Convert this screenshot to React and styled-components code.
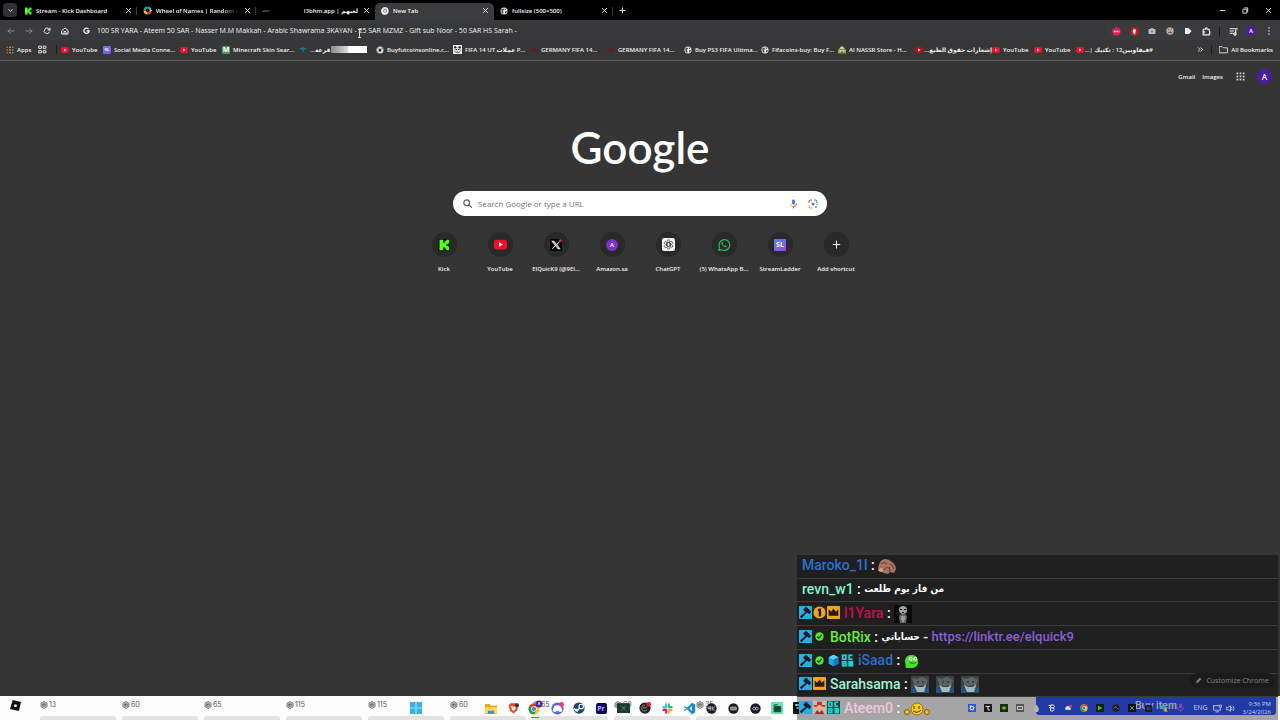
import React from "react";
import styled, { createGlobalStyle, css } from "styled-components";

const GlobalStyle = createGlobalStyle`
  * { box-sizing: border-box; }
  html, body { margin: 0; background: #353535; }
  body { font: 600 6px/10px "Open Sans", "Noto Sans", "DejaVu Sans", sans-serif; color: #f0f0f0; }
  button, input { font: inherit; color: inherit; border: 0; background: none; padding: 0; margin: 0; outline: 0; }
  button { display: inline-flex; align-items: center; justify-content: center; }
  a { color: inherit; text-decoration: none; }
  svg { display: block; flex: none; }
`;

/* ---------- layout ---------- */
const Screen = styled.div`
  position: relative;
  display: flex;
  flex-direction: column;
  min-height: 100vh;
  overflow: hidden;
`;
const TabStrip = styled.header`
  display: flex;
  align-items: flex-end;
  height: 20px;
  padding-left: 3px;
  background: #000;
`;
const TabSearch = styled.button`
  width: 14px;
  height: 14px;
  margin: 0 1px 3px 0;
  border-radius: 4px;
  background: #303132;
`;
const Tab = styled.div`
  display: flex;
  align-items: center;
  gap: 4px;
  width: 119px;
  height: 17px;
  padding: 0 5px 2px 6px;
  border-radius: 5px 5px 0 0;
  background: ${(p) => (p.$active ? "#3b3c3d" : "transparent")};
`;
const TabDivider = styled.span`
  width: 1px;
  height: 8px;
  margin: 0 0 5px -1px;
  background: #3c3c3c;
`;
const TabTitle = styled.span`
  flex: 1;
  overflow: hidden;
  white-space: nowrap;
  color: #f6f6f6;
  ${(p) => p.$fade && css`mask-image: linear-gradient(90deg, #000 80%, transparent);`}
`;
const TabClose = styled.button`
  width: 8px;
  height: 10px;
`;
const NewTabButton = styled.button`
  width: 18px;
  height: 17px;
  padding-bottom: 2px;
`;
const WindowControls = styled.div`
  display: flex;
  margin-left: auto;
`;
const WindowButton = styled.button`
  width: 23px;
  height: 20px;
`;
const Toolbar = styled.div`
  position: relative;
  display: flex;
  align-items: center;
  height: 20px;
  padding-top: 2px;
  background: #3a3b3c;
`;
const NavButton = styled.button`
  width: 18px;
  height: 18px;
  color: ${(p) => (p.$dim ? "#858585" : "#ececec")};
`;
const NavGroup = styled.div`
  display: flex;
  width: 80px;
  padding-left: 2px;
`;
const AddressBar = styled.label`
  display: flex;
  flex: 1;
  align-items: center;
  gap: 7px;
  height: 17px;
  padding-left: 3px;
  border-radius: 9px;
  background: #373839;
`;
const AddressInput = styled.input`
  flex: 1;
  color: #f4f4f4;
  font-size: 7px;
  font-weight: 400;
`;
const TextCursor = styled.svg`
  position: absolute;
  left: 357px;
  top: 9px;
`;
const Extensions = styled.div`
  display: flex;
  align-items: center;
  padding-right: 2px;
`;
const ToolButton = styled.button`
  width: 18px;
  height: 18px;
`;
const Divider = styled.span`
  width: 1px;
  height: 9px;
  margin: 0 4px;
  background: #1c1c1c;
`;
const BookmarksBar = styled.nav`
  display: flex;
  align-items: center;
  height: 21px;
  padding: 0 7px 1px 6px;
  background: #373737;
  border-bottom: 1px solid #5a5a5a;
`;
const Bookmark = styled.a`
  display: flex;
  align-items: center;
  gap: 3px;
  width: ${(p) => (p.$short ? "42px" : "77px")};
  white-space: nowrap;
`;
const BookmarkText = styled.span`
  min-width: ${(p) => (p.$short ? "0" : "57px")};
`;
const BlankedText = styled.span`
  display: inline-block;
  width: 36px;
  height: 7px;
  margin: 0 4px 0 1px;
  vertical-align: middle;
  background: linear-gradient(90deg, #8b8b8b, #d6d6d6 45%, #fff 50%);
`;
const AppsLink = styled.a`
  display: flex;
  align-items: center;
  gap: 3px;
  width: 32px;
`;
const GroupsLink = styled.a`
  padding-right: 5px;
`;
const BookmarkEnd = styled.div`
  display: flex;
  align-items: center;
  gap: 3px;
  margin-left: auto;
  white-space: nowrap;
`;

/* ---------- new tab page ---------- */
const NewTabPage = styled.main`
  display: flex;
  flex: 1;
  flex-direction: column;
  align-items: center;
  background: #353535;
`;
const AccountNav = styled.nav`
  display: flex;
  align-self: flex-end;
  align-items: center;
  gap: 7px;
  height: 31px;
  padding-right: 8px;
`;
const AppsButton = styled.button`
  margin: 0 5px 0 6px;
`;
const Avatar = styled.span`
  display: flex;
  align-items: center;
  justify-content: center;
  width: ${(p) => p.$size}px;
  height: ${(p) => p.$size}px;
  border-radius: 50%;
  background: ${(p) => p.$color || "#4a1d9e"};
  color: #fff;
  font-size: ${(p) => (p.$size > 12 ? 8 : 6)}px;
  font-weight: 600;
`;
const Wordmark = styled.h1`
  margin: 26px 0 0;
  height: 73px;
  color: #fff;
  font: 600 44px/58px Lato, sans-serif;
`;
const SearchBox = styled.label`
  display: flex;
  align-items: center;
  width: 374px;
  height: 25px;
  padding: 0 4px 0 10px;
  border-radius: 13px;
  background: #fff;
`;
const SearchInput = styled.input`
  flex: 1;
  padding-left: 6px;
  color: #444;
  font-size: 8px;
  font-weight: 400;
  &::placeholder { color: #757575; opacity: 1; }
`;
const SearchAction = styled.button`
  width: 20px;
  height: 12px;
`;
const Shortcuts = styled.div`
  display: flex;
  padding-top: 16px;
`;
const Shortcut = styled.a`
  display: flex;
  flex-direction: column;
  align-items: center;
  gap: 7px;
  width: 56px;
  white-space: nowrap;
`;
const ShortcutIcon = styled.span`
  display: flex;
  align-items: center;
  justify-content: center;
  width: 25px;
  height: 25px;
  border-radius: 50%;
  background: #292929;
`;
const LetterTile = styled.span`
  display: flex;
  flex: none;
  align-items: center;
  justify-content: center;
  width: ${(p) => p.$size}px;
  height: ${(p) => p.$size}px;
  border-radius: ${(p) => p.$radius || 1}px;
  background: ${(p) => p.$color};
  color: ${(p) => p.$ink || "#fff"};
  font-size: ${(p) => p.$font || 5}px;
  font-weight: 700;
  line-height: 1;
`;
const CustomizeButton = styled.button`
  position: absolute;
  right: 6px;
  bottom: 32px;
  z-index: 3;
  gap: 4px;
  width: 84px;
  height: 15px;
  border-radius: 8px;
  background: #1b1b1b;
  color: #858585;
  font-size: 7px;
  font-weight: 400;
`;

/* ---------- bottom strip ---------- */
const BottomStrip = styled.footer`
  position: relative;
  height: 24px;
  overflow: hidden;
  background: #fdfdfd;
  color: #555;
`;
const StoreRow = styled.div`
  display: flex;
  gap: 6px;
  padding-left: 10px;
`;
const StoreLogo = styled.a`
  width: 24px;
  padding-top: 4px;
`;
const StoreItem = styled.div`
  display: flex;
  flex-direction: column;
  gap: 6px;
  width: 76px;
`;
const Price = styled.span`
  display: flex;
  align-items: center;
  gap: 1px;
  height: 14px;
  padding-top: 3px;
  font: 7px/10px Inter, sans-serif;
`;
const ItemCard = styled.span`
  height: 10px;
  border-radius: 3px 3px 0 0;
  background: #e2e2e2;
`;
const BuyButton = styled.button`
  position: absolute;
  right: 4px;
  top: 0;
  width: 240px;
  height: 19px;
  border-radius: 0 0 3px 3px;
  background: #335aff;
  color: #fff;
  font: 600 10px/19px Inter, sans-serif;
`;
const TaskIcons = styled.div`
  position: absolute;
  inset: 0 auto 0 405px;
  display: flex;
  align-items: center;
`;
const TaskButton = styled.button`
  width: 22px;
  height: 24px;
  margin-right: ${(p) => (p.$start ? "53px" : 0)};
  ${(p) => p.$open && css`background: linear-gradient(#d8584c, #d8584c) center bottom 2px / 8px 1px no-repeat;`}
`;
const Tray = styled.div`
  position: absolute;
  right: 9px;
  bottom: 0;
  z-index: 4;
  display: flex;
  align-items: center;
  height: 24px;
  color: #cbd0e8;
  font-weight: 400;
`;
const TrayButton = styled.button`
  width: 16px;
  height: 20px;
`;
const Language = styled.span`
  width: 25px;
  font-size: 7px;
  text-align: center;
`;
const Clock = styled.time`
  width: 33px;
  line-height: 8px;
  text-align: right;
`;

/* ---------- chat overlay ---------- */
const Chat = styled.section`
  position: absolute;
  right: 2px;
  bottom: 0;
  z-index: 2;
  display: flex;
  flex-direction: column;
  width: 481px;
  height: 165px;
  font: 500 14px/20px Roboto, "DejaVu Sans", sans-serif;
`;
const Message = styled.div`
  display: flex;
  flex: 1;
  align-items: center;
  padding: 0 0 2px 1px;
  white-space: pre;
  color: #fff;
  background: ${(p) => (p.$faded ? "rgba(0,0,0,.35)" : "#1f1f1f")};
  border-bottom: ${(p) => (p.$faded ? 0 : "1px solid #3b3b3b")};
`;
const Badge = styled.span`
  display: flex;
  justify-content: center;
  width: 14px;
`;
const Author = styled.span`
  margin-left: 4px;
  color: ${(p) => p.$color};
`;
const ArabicText = styled.span`
  font: 700 10px/20px "DejaVu Sans Condensed", "DejaVu Sans", sans-serif;
`;
const ChatLink = styled.a`
  color: #8b5ddb;
  font-size: 13px;
`;
const Emote = styled.span`
  margin: 2px 7px 0 0;
`;

/* ---------- drawings ---------- */
const Line = ({ d, size = 8, width = 2, color = "currentColor", fill = "none" }) => (
  <svg width={size} height={size} viewBox="0 0 16 16" fill={fill} stroke={color} strokeWidth={width} strokeLinecap="round" strokeLinejoin="round"><path d={d} /></svg>
);
const Cross = ({ size = 7 }) => <Line size={size} d="M3 3l10 10M13 3L3 13" color="#f0f0f0" />;
const Kick = ({ size = 8, tile }) => (
  <svg width={size} height={size} viewBox="0 0 16 16">
    {tile && <rect width="16" height="16" fill="#071006" />}
    <path fill="#53fc18" d="M2 1h5v4h2V3h2V1h4v5h-2v1h-2v2h2v1h2v5h-4v-2H9v-2H7v4H2z" />
  </svg>
);
const YouTube = ({ size = 8, color = "#f20d2f" }) => (
  <svg width={size} height={size} viewBox="0 0 16 16"><rect y="2" width="16" height="12" rx="3.5" fill={color} /><path d="M6.2 5.2v5.6L11 8z" fill="#fff" /></svg>
);
const Globe = ({ size = 8 }) => (
  <svg width={size} height={size} viewBox="0 0 16 16"><circle cx="8" cy="8" r="7" fill="#e9e9e9" /><path d="M3 4l4-1 1 3-3 2 2 2-1 4-3-3zM9 2l4 3-3 1zM10 9l4-1-2 5-2-1z" fill="#444" /></svg>
);
const Chrome = ({ size = 8, mono }) => (
  <svg width={size} height={size} viewBox="0 0 24 24">
    <circle cx="12" cy="12" r="11" fill={mono ? "#eee" : "#fbc116"} />
    <path d="M12 12L2.5 6.5A11 11 0 0121.5 6.5H12z" fill={mono ? "#ddd" : "#e33b2e"} />
    <path d="M12 12L2.5 6.5A11 11 0 0012 23l4.8-8.3z" fill={mono ? "#fff" : "#229c48"} />
    <circle cx="12" cy="12" r="5.4" fill={mono ? "#444" : "#fff"} /><circle cx="12" cy="12" r="4" fill={mono ? "#ddd" : "#347be5"} />
  </svg>
);
const Wheel = () => (
  <svg width="9" height="9" viewBox="0 0 16 16" fill="none" strokeWidth="4">
    <path d="M8 3a5 5 0 015 5" stroke="#369be8" /><path d="M13 8a5 5 0 01-5 5" stroke="#e94335" /><path d="M8 13a5 5 0 01-5-5" stroke="#f5bd18" /><path d="M3 8a5 5 0 015-5" stroke="#28a55b" />
    <path d="M13 6l3 2-3 2z" fill="#fff" />
  </svg>
);
const GoogleG = () => <svg width="7" height="8" viewBox="0 0 16 16" fill="none" stroke="#f1f1f1" strokeWidth="3"><path d="M13 4A6 6 0 1014 8H8" /></svg>;
const Dots = ({ size = 9, colors = ["#dcdcdc"] }) => (
  <svg width={size} height={size} viewBox="0 0 16 16">{[0, 1, 2].map((r) => [0, 1, 2].map((c) => <rect key={r + "-" + c} x={1 + c * 5.5} y={1 + r * 5.5} width="3" height="3" fill={colors[(colors.length > 1 ? c : 0) % colors.length]} />))}</svg>
);
const Squares = () => <Line size={9} width={1.6} d="M2 2h4v4H2zM10 2h4v4h-4zM2 10h4v4H2zM10 10h4v4h-4z" />;
const Cup = () => <svg width="8" height="8" viewBox="0 0 16 16" fill="none" stroke="#237da5" strokeWidth="2"><path d="M1 6q7-5 14 0M8 5v8M5 7q3-2 6 0" /></svg>;
const Ball = () => <svg width="8" height="8" viewBox="0 0 16 16"><circle cx="8" cy="8" r="7" fill="#ddd" /><path d="M8 5l3 2-1 4H6L5 7zM2 4l3-1v2zM11 3l3 2-2 1zM2 11l2 0 1 3z" fill="#222" /></svg>;
const Panda = () => <svg width="9" height="9" viewBox="0 0 16 16"><rect width="16" height="16" fill="#f1f1f1" /><circle cx="4" cy="4" r="2" /><circle cx="12" cy="4" r="2" /><circle cx="8" cy="9" r="5" fill="#fff" stroke="#222" /><circle cx="6" cy="8" r="1.2" /><circle cx="10" cy="8" r="1.2" /><path d="M6 12h4" stroke="#111" /></svg>;
const RedDash = () => <svg width="8" height="8" viewBox="0 0 16 16"><path d="M0 8l6-3 9 2-2 4H3z" fill="#701426" /></svg>;
const Castle = () => <svg width="8" height="9" viewBox="0 0 16 16"><rect y="8" width="16" height="8" fill="#78b04d" /><path d="M3 13V5l5-4 5 4v8z" fill="#d7d08b" /><path d="M5 7h2v2H5zM9 7h2v2H9zM7 11h2v4H7z" fill="#263f20" /></svg>;
const XLogo = () => <svg width="12" height="12" viewBox="0 0 16 16"><rect width="16" height="16" fill="#050505" /><path d="M3 3h2l8 10h-2zM13 3L9 7M7 9l-4 4" fill="none" stroke="#e8e8e8" strokeWidth="1.4" /><circle cx="14" cy="2" r="2" fill="#e71645" /></svg>;
const Knot = () => (
  <svg width="13" height="13" viewBox="0 0 24 24"><rect width="24" height="24" rx="4" fill="#f4f4f4" />
    <g fill="none" stroke="#333" strokeWidth="1.3">{[0, 60, 120, 180, 240, 300].map((a) => <path key={a} transform={`rotate(${a} 12 12)`} d="M9 10V6.6a3.2 3.2 0 015.6-2.1M9 10l3-1.8 4.8 2.8" />)}</g>
  </svg>
);
const WhatsApp = () => <svg width="14" height="14" viewBox="0 0 24 24"><path d="M3 21l1.3-5A9.2 9.2 0 1112 21.2a9.2 9.2 0 01-4.3-1.1z" fill="none" stroke="#27b45c" strokeWidth="2.2" /><path d="M8.2 6.8c-1.5 1.2-1.2 3.5 1.4 6.2s5.4 3.9 7 2.3l.3-1.5-2.6-1.4-1.3 1.2c-1.7-.7-2.7-1.7-3.3-3.2l1-1.2-1.1-2.5z" fill="#27b45c" /></svg>;
const Mic = ({ color }) => (
  <svg width="9" height="10" viewBox="0 0 16 18"><rect x="5.5" y="1" width="5" height="9" rx="2.5" fill={color || "#347be8"} /><path d="M2.5 8a5.5 5.5 0 005.5 5.5" fill="none" stroke={color || "#f0a929"} strokeWidth="1.8" /><path d="M13.5 8A5.5 5.5 0 018 13.5V17" fill="none" stroke={color || "#e64637"} strokeWidth="1.8" /></svg>
);
const Lens = () => (
  <svg width="10" height="10" viewBox="0 0 20 20" fill="none" strokeWidth="2.2"><path d="M2 8V6a4 4 0 014-4h2" stroke="#e84a3c" /><path d="M12 2h2a4 4 0 014 4v2" stroke="#3d7fea" /><path d="M2 12v2a4 4 0 004 4h3" stroke="#efb42c" /><circle cx="10" cy="10" r="3" fill="#3d7fea" /><circle cx="16" cy="16" r="1.8" fill="#35a852" /><path d="M18 10v2" stroke="#35a852" /></svg>
);
const Robux = () => <svg width="8" height="8" viewBox="0 0 16 16" fill="none" stroke="#444"><path d="M8 1l6 3.5v7L8 15l-6-3.5v-7z" strokeWidth="1.5" /><path d="M8 4l3.5 2v4L8 12l-3.5-2V6z" strokeWidth="1.5" /><rect x="7" y="7" width="2" height="2" fill="#444" /></svg>;
const Disc = ({ color, children, size = 12 }) => <svg width={size} height={size} viewBox="0 0 16 16"><circle cx="8" cy="8" r="7.5" fill={color} />{children}</svg>;
const Box = ({ color, children, size = 9 }) => <svg width={size} height={size} viewBox="0 0 16 16"><rect width="16" height="16" rx="1" fill={color} />{children}</svg>;
const DiscordFace = ({ color = "#fff" }) => <path d="M4 5q4-2 8 0l2 6-3 1.5-1-1H6l-1 1L2 11z" fill={color} />;

const Hammer = () => <Box size={13} color="#26aee8"><path d="M7 2l2-1 6 6-2 3-3-2-7 7-2-2 7-6-3-2z" fill="#101b24" /></Box>;
const Crown = () => <Box size={13} color="#f0a51c"><path d="M2 4l3 3 3-4 3 4 3-3v8H2z" fill="#2a1b05" /></Box>;
const Coin = () => <Disc size={13} color="#f0a51c"><path d="M6 4l2-1h2v10H7V6H6z" fill="#251706" /></Disc>;
const Check = () => <Disc size={9} color="#57e326"><path d="M4 8l3 3 5-6" fill="none" stroke="#123f0b" strokeWidth="2" /></Disc>;
const Cube = () => <svg width="13" height="13" viewBox="0 0 16 16"><path d="M8 1l6 3v8l-6 3-6-3V4z" fill="#1ba8e8" /><path d="M8 1l6 3-6 3-6-3z" fill="#5ed1fa" /><path d="M8 7v8l6-3V4z" fill="#1379bd" /></svg>;
const Sub = () => (
  <svg width="13" height="13" viewBox="0 0 16 16" fill="none" stroke="#17d5d0" strokeWidth="2">
    <rect width="16" height="16" fill="#163a41" stroke="none" />
    <path d="M2 1.5h4v5H2zM14 1.5h-4v5h4M2 9.5h4v5H2zM2 12h4M10 9.5h4v5h-4zM12 9v6" />
  </svg>
);
const Spy = () => <svg width="13" height="13" viewBox="0 0 16 16"><rect width="16" height="16" fill="#c8bba9" /><path d="M1 5h14v2H1zM5 1h6v4H5z" fill="#c62f27" /><circle cx="8" cy="8" r="3" fill="#e9b890" /><path d="M2 16l3-5 3 3 3-3 3 5z" fill="#a33127" /></svg>;

const Muscle = () => <svg width="18" height="16" viewBox="0 0 18 16"><path d="M0 13Q0 5 4 2q5-3 10 2 4 3 4 7l-2 4-4-1-2 2-4-1-2-1z" fill="#a67460" /><path d="M3 6q3-3 6 0M6 12q2-4 5-2M12 6q3 1 4 5M11 9l1 5" fill="none" stroke="#5b3c35" /><circle cx="3" cy="12" r="2" fill="#d5a088" /></svg>;
const Skull = () => <svg width="18" height="18" viewBox="0 0 18 18"><rect width="18" height="18" fill="#080808" /><ellipse cx="9" cy="5" rx="4" ry="4" fill="#a2a2a2" /><path d="M6 4h2v1H6zM10 4h2v1h-2zM8 7h2v1H8z" fill="#111" /><path d="M5 12q0-3 4-3t4 3l-1 6H6z" fill="#666" /><path d="M7 12h4M7 14h4M8 16h2" stroke="#ccc" /></svg>;
const Blob = () => <svg width="15" height="15" viewBox="0 0 16 16"><path d="M2 15L1 7Q2 1 8 1t7 6-5 8z" fill="#49df2d" /><circle cx="7" cy="5" r="2" fill="#fff" /><circle cx="12" cy="5" r="2" fill="#fff" /><path d="M7 5h1M12 5h1" stroke="#111" /><path d="M6 9q4 2 7 0" fill="none" stroke="#176511" /></svg>;
const CatEmote = () => <svg width="18" height="17" viewBox="0 0 18 17"><rect width="18" height="17" fill="#39444a" /><path d="M1 2l5 1 5-2 6 3-2 5-11 1z" fill="#5f6361" /><path d="M3 9l4 2 5 0 3-3-1 8H6z" fill="#a5b6be" /><path d="M0 9l3 1 3 7H0zM14 12h4v5h-5z" fill="#24527f" /><path d="M6 6h2M11 6h2" stroke="#1b1b1b" strokeWidth="1" /></svg>;
const Smile = () => <svg width="26" height="14" viewBox="0 0 26 14"><circle cx="13" cy="7" r="6" fill="#f8cf1c" stroke="#a36c04" /><circle cx="3" cy="10" r="2.5" fill="#efc11a" stroke="#805b0b" /><circle cx="23" cy="10" r="2.5" fill="#efc11a" stroke="#805b0b" /><path d="M10 4v3M15 4v3M9 9q4 3 8-1" fill="none" stroke="#4c2c00" /></svg>;

/* ---------- data ---------- */
const sl = (size, font) => <LetterTile $size={size} $font={font} $color="linear-gradient(135deg,#4d8be8,#9545eb)">SL</LetterTile>;
const tabs = [
  { icon: <Kick />, title: "Stream - Kick Dashboard", divider: true },
  { icon: <Wheel />, title: "Wheel of Names | Random nam", fade: true, divider: true },
  { icon: <Line d="M2 9l6-1 6 0" color="#777" />, title: "لعبهم | l3bhm.app", rtl: true },
  { icon: <Chrome mono />, title: "New Tab", active: true },
  { icon: <Globe />, title: "fullsize (500×500)", divider: true },
];
const bookmarks = [
  { icon: <YouTube />, text: "YouTube", short: true },
  { icon: sl(8, 4), text: "Social Media Conne..." },
  { icon: <YouTube />, text: "YouTube", short: true },
  { icon: <LetterTile $size={8} $font={7} $color="#4c9a52">M</LetterTile>, text: "Minecraft Skin Sear..." },
  { icon: <Cup />, text: "قرعة...", rtl: true, blanked: true },
  { icon: <Ball />, text: "Buyfutcoinsonline.c..." },
  { icon: <Panda />, text: "FIFA 14 UT عملات P..." },
  { icon: <RedDash />, text: "GERMANY FIFA 14..." },
  { icon: <RedDash />, text: "GERMANY FIFA 14..." },
  { icon: <Globe />, text: "Buy PS3 FIFA Ultima..." },
  { icon: <Globe />, text: "Fifacoins-buy: Buy F..." },
  { icon: <Castle />, text: "Al NASSR Store - H..." },
  { icon: <YouTube color="#b50d18" />, text: "إشعارات حقوق الطبع...", rtl: true },
  { icon: <YouTube />, text: "YouTube", short: true },
  { icon: <YouTube />, text: "YouTube", short: true },
  { icon: <YouTube />, text: "#فيفاوبين12 : تكتيك |...", rtl: true },
];
const shortcuts = [
  [<Kick size={12} tile />, "Kick"],
  [<YouTube size={13} />, "YouTube"],
  [<XLogo />, "ElQuicK9 (@9El..."],
  [<Avatar $size={12} $color="#7834c8">A</Avatar>, "Amazon.sa"],
  [<Knot />, "ChatGPT"],
  [<WhatsApp />, "(5) WhatsApp B..."],
  [sl(12, 7), "StreamLadder"],
  [<Line d="M8 2v12M2 8h12" size={9} />, "Add shortcut"],
];
const extensions = [
  ["Ad blocker", <Disc size={9} color="#e41f50"><path d="M3 8h10" stroke="#fff" strokeWidth="3" strokeDasharray="2 1" /></Disc>],
  ["Content blocker", <Disc size={9} color="#cf1520"><path d="M6 4h4v5l-1 4H7L5 8z" fill="#fff" /></Disc>],
  ["Camera", <svg width="8" height="8" viewBox="0 0 16 16"><path d="M1 4h4l1-2h4l1 2h4v10H1z" fill="#bdbdbd" /><circle cx="8" cy="9" r="3" fill="#777" stroke="#eee" /></svg>],
  ["Cookies", <Disc size={8} color="#bba99e"><path d="M4 5h2M10 4h2M4 11h8M7 8h2" stroke="#735c50" strokeWidth="2" /></Disc>],
  ["Player", <svg width="8" height="8" viewBox="0 0 16 16"><path d="M2 2h7l6 6-5 6H2z" fill="#eee" /></svg>],
  ["Extensions", <Line size={9} d="M2 4h4V2h3v2h4v4h1v3h-1v3H2v-4h2V8H2z" />],
];
const taskbar = [
  ["Files", <svg width="12" height="11" viewBox="0 0 16 14"><path d="M0 1h6l2 2h8v11H0z" fill="#e9a91d" /><path d="M0 5h16v8H0z" fill="#ffd45b" /><path d="M4 10h8v4H4z" fill="#2d91da" /></svg>],
  ["Brave", <svg width="11" height="12" viewBox="0 0 16 16"><path d="M3 1h10l2 4-2 7-5 4-5-4-2-7z" fill="#ee492c" /><path d="M4 5l4 1 4-1-2 6-2 1-2-1z" fill="#fff" /><circle cx="13" cy="4" r="3" fill="#333" /></svg>],
  ["Chrome", <svg width="16" height="16" viewBox="0 0 16 16"><g transform="translate(1 3)"><Chrome size={12} /></g><circle cx="12" cy="4" r="3.5" fill="#4f249f" /><path d="M11 5l1-3 1 3" stroke="#fff" strokeWidth=".7" fill="none" /></svg>, true],
  ["Discord", <Disc size={13} color="#5865e9"><DiscordFace /><circle cx="13" cy="3" r="3" fill="#ea3f66" /></Disc>],
  ["Steam", <Disc color="#174572"><circle cx="11" cy="6" r="3" fill="none" stroke="#fff" strokeWidth="1.5" /><path d="M1 9l5 2 3-3" stroke="#fff" strokeWidth="2" fill="none" /><circle cx="5" cy="11" r="2" fill="#fff" /></Disc>],
  ["Premiere", <LetterTile $size={11} $font={7} $radius={2} $color="#09075d" $ink="#c5a5ff">Pr</LetterTile>],
  ["Capture", <svg width="13" height="11" viewBox="0 0 16 13"><rect width="16" height="12" fill="#173a30" /><path d="M5 3l6 6M11 3l-6 6" stroke="#619d76" /></svg>],
  ["OBS", <Disc color="#222"><path d="M8 4a4 4 0 103 6M5 7q3 3 6-1" fill="none" stroke="#aaa" /><circle cx="13" cy="3" r="3" fill="#ed1b26" /></Disc>],
  ["Slack", <svg width="11" height="11" viewBox="0 0 16 16" strokeWidth="3" strokeLinecap="round"><path d="M6 2v4M2 6h3" stroke="#36c5f0" /><path d="M10 6h4M10 2v4" stroke="#2eb67d" /><path d="M10 10v4M10 10h4" stroke="#ecb22e" /><path d="M2 10h4M6 10v4" stroke="#e01e5a" /></svg>],
  ["Code", <svg width="13" height="13" viewBox="0 0 16 16"><path d="M11 1l4 2v10l-4 2-6-6-3 2-1-1 3-2-3-2 1-1 3 2zM11 5L8 8l3 3z" fill="#168bd2" fillRule="evenodd" /></svg>],
  ["4K Capture", <Disc size={11} color="#181a28"><path d="M3 5v3h3V5v6M9 5v6M13 5l-3 3 3 3" fill="none" stroke="#fff" /></Disc>],
  ["Stream Deck", <Disc size={11} color="#181a28"><path d="M4 6h8v4H4z" fill="#777" stroke="#ddd" /></Disc>],
  ["Wave Link", <Disc size={11} color="#181a28"><circle cx="6" cy="8" r="2" fill="none" stroke="#ddd" /><circle cx="10" cy="8" r="2" fill="none" stroke="#ddd" /></Disc>],
  ["Camera Hub", <Box size={12} color="#67e4ad"><path d="M4 6h9v7H4zM3 5q3-3 6-1" fill="#164737" stroke="#164737" /></Box>],
  ["Cap", <Box size={12} color="#111"><path d="M3 4h7M5 8h7" stroke="#fff" strokeWidth="2" /></Box>],
];
const trayIcons = [
  <Box color="#3156d4" size={8}><path d="M5 4l7 2-2 6-6-2z" fill="none" stroke="#fff" strokeWidth="2" /></Box>,
  <Box color="#171717" size={8}><path d="M3 5h9M8 5v7h4" stroke="#ddd" strokeWidth="2" fill="none" /></Box>,
  <Box color="#142b10" size={8}><path d="M3 8q5-7 10 0-5 7-10 0z" fill="#6eac1d" /></Box>,
  <Box color="#555" size={8}><path d="M3 5h10v6H3z" fill="none" stroke="#ccc" strokeWidth="2" /></Box>,
  <svg width="7" height="9" viewBox="0 0 14 16"><path d="M7 0l5 8-2 7H3l-2-6z" fill="#b9b0a6" /></svg>,
  <Line size={8} color="#d9def7" d="M2 3h4M3 7h3M6 2h5q3 3 0 6 3 3-1 6H6zM7 8h4" />,
  <svg width="8" height="8" viewBox="0 0 16 16"><DiscordFace color="#d9dcf5" /><circle cx="13" cy="4" r="3" fill="#df3b4d" /></svg>,
  <Chrome size={8} />,
  <Box color="#0b210d" size={8}><path d="M4 3l9 5-9 5z" fill="#49b52e" /></Box>,
  <Disc color="#202027" size={8}><path d="M4 9q2-6 5-2t4 2" fill="none" stroke="#d34d4d" strokeWidth="2" /></Disc>,
  <Box color="#111" size={8}><path d="M4 4l8 8M12 4l-8 8" stroke="#6a9f78" strokeWidth="2" /></Box>,
  <Box color="#161e32" size={7}><path d="M4 5h8v6H4z" fill="#33456d" /></Box>,
  <svg width="8" height="8" viewBox="0 0 16 16"><path d="M1 2h9l2 6-5 4-6-4z" fill="#29a9c0" /><path d="M11 7l4 8H7z" fill="#edb233" /></svg>,
  <Mic color="#8051b1" />,
];
const messages = [
  { name: "Maroko_1l", color: "#2b70cc", body: <Emote><Muscle /></Emote> },
  { name: "revn_w1", color: "#84f1cf", body: <ArabicText dir="rtl">من فاز يوم طلعت</ArabicText> },
  { badges: [Hammer, Coin, Crown], name: "l1Yara", color: "#c50f48", body: <Emote><Skull /></Emote> },
  { badges: [Hammer, Check], name: "BotRix", color: "#66f036", body: <><ArabicText>حساباتي</ArabicText><span> - </span><ChatLink href="https://linktr.ee/elquick9">https://linktr.ee/elquick9</ChatLink></> },
  { badges: [Hammer, Check, Cube, Sub], name: "iSaad", color: "#2b70cc", body: <Emote><Blob /></Emote> },
  { badges: [Hammer, Crown], name: "Sarahsama", color: "#a0f5d5", body: <><Emote><CatEmote /></Emote><Emote><CatEmote /></Emote><Emote><CatEmote /></Emote></> },
  { badges: [Hammer, Spy, Sub], name: "Ateem0", color: "#f4c3df", body: <Emote><Smile /></Emote>, faded: true },
];
const prices = [13, 60, 65, 115, 115, 60, 65, 60, 35];

export default function App() {
  return (
    <Screen>
      <GlobalStyle />
      <TabStrip>
        <TabSearch aria-label="Search tabs"><Line size={7} d="M4 6l4 4 4-4" /></TabSearch>
        {tabs.map((t) => (
          <React.Fragment key={t.title}>
            <Tab $active={t.active}>
              {t.icon}
              <TabTitle $fade={t.fade} dir={t.rtl ? "rtl" : "ltr"}>{t.title}</TabTitle>
              <TabClose aria-label="Close tab"><Cross /></TabClose>
            </Tab>
            {t.divider && <TabDivider />}
          </React.Fragment>
        ))}
        <NewTabButton aria-label="New tab"><Line size={7} d="M8 2v12M2 8h12" /></NewTabButton>
        <WindowControls>
          <WindowButton aria-label="Minimize"><Line size={7} d="M3 8h10" /></WindowButton>
          <WindowButton aria-label="Restore"><Line size={7} d="M3 5h8v9H3zM6 2h7v9" /></WindowButton>
          <WindowButton aria-label="Close"><Cross /></WindowButton>
        </WindowControls>
      </TabStrip>

      <Toolbar>
        <NavGroup>
          <NavButton $dim aria-label="Back"><Line d="M14 8H2M7 3L2 8l5 5" /></NavButton>
          <NavButton $dim aria-label="Forward"><Line d="M2 8h12M9 3l5 5-5 5" /></NavButton>
          <NavButton aria-label="Reload"><Line d="M13 10a5.5 5.5 0 11-1-6l2 2M14 2v4h-4" /></NavButton>
          <NavButton aria-label="Home"><Line d="M2 7l6-5 6 5v7H2zM6 14V9h4v5" /></NavButton>
        </NavGroup>
        <AddressBar>
          <GoogleG />
          <AddressInput aria-label="Address" defaultValue="100 SR YARA - Ateem 50 SAR - Nasser M.M Makkah - Arabic Shawrama 3KAYAN - 25 SAR MZMZ - Gift sub Noor - 50 SAR HS Sarah -" />
        </AddressBar>
        <Extensions>
          {extensions.map(([label, icon]) => <ToolButton key={label} aria-label={label}>{icon}</ToolButton>)}
          <Divider />
          <ToolButton aria-label="Media"><Line size={9} d="M2 3h8M2 7h6M2 11h4M12 3h3M12 3v8M12 11a2 2 0 11-3 0 2 2 0 013 0" /></ToolButton>
          <ToolButton aria-label="Profile"><Avatar $size={10}>A</Avatar></ToolButton>
          <ToolButton aria-label="Menu"><Line d="M8 2v.2M8 8v.2M8 14v.2" width={3} /></ToolButton>
        </Extensions>
        <TextCursor width="5" height="9" viewBox="0 0 5 9" fill="none" stroke="#ddd"><path d="M1 .5h3M2.5 1v7M1 8.5h3" /></TextCursor>
      </Toolbar>

      <BookmarksBar>
        <AppsLink href="#apps"><Dots size={8} colors={["#d95045", "#deb13b", "#51a566"]} />Apps</AppsLink>
        <GroupsLink href="#groups" aria-label="Tab groups"><Squares /></GroupsLink>
        <Divider />
        {bookmarks.map((b, i) => (
          <Bookmark key={i} href="#bookmark" $short={b.short}>
            {b.icon}
            <BookmarkText $short={b.short} dir={b.rtl ? "rtl" : "ltr"}>{b.blanked && <BlankedText />}{b.text}</BookmarkText>
          </Bookmark>
        ))}
        <BookmarkEnd>
          <Line size={7} d="M3 4l4 4-4 4M9 4l4 4-4 4" />
          <Divider />
          <Line size={9} width={1.5} d="M1 3h5l2 2h7v9H1z" />
          <span>All Bookmarks</span>
        </BookmarkEnd>
      </BookmarksBar>

      <NewTabPage>
        <AccountNav>
          <a href="#gmail">Gmail</a>
          <a href="#images">Images</a>
          <AppsButton aria-label="Google apps"><Dots /></AppsButton>
          <Avatar $size={15}>A</Avatar>
        </AccountNav>
        <Wordmark>Google</Wordmark>
        <SearchBox>
          <Line size={9} color="#555" d="M10.5 10.5L15 15M11.5 6.5a5 5 0 11-10 0 5 5 0 0110 0" />
          <SearchInput aria-label="Search" placeholder="Search Google or type a URL" />
          <SearchAction aria-label="Voice search"><Mic /></SearchAction>
          <SearchAction aria-label="Image search"><Lens /></SearchAction>
        </SearchBox>
        <Shortcuts>
          {shortcuts.map(([icon, label]) => <Shortcut key={label} href="#shortcut"><ShortcutIcon>{icon}</ShortcutIcon>{label}</Shortcut>)}
        </Shortcuts>
      </NewTabPage>

      <BottomStrip>
        <StoreRow>
          <StoreLogo href="#store" aria-label="Store"><svg width="11" height="11" viewBox="0 0 16 16"><path d="M4 0l12 3-3 13-13-3zM6.5 6l-.8 3.5 3.6.9.8-3.5z" fill="#111" fillRule="evenodd" /></svg></StoreLogo>
          {prices.map((p, i) => <StoreItem key={i}><Price><Robux />{p}</Price><ItemCard /></StoreItem>)}
        </StoreRow>
        <BuyButton>Buy item</BuyButton>
        <TaskIcons>
          <TaskButton $start aria-label="Start"><svg width="12" height="12" viewBox="0 0 12 12" fill="#36b4e9"><path d="M0 0h5.7v5.7H0zM6.3 0H12v5.7H6.3zM0 6.3h5.7V12H0zM6.3 6.3H12V12H6.3z" /></svg></TaskButton>
          {taskbar.map(([label, icon, open]) => <TaskButton key={label} $open={open} aria-label={label}>{icon}</TaskButton>)}
        </TaskIcons>
      </BottomStrip>

      <Chat aria-label="Live chat">
        {messages.map((m) => (
          <Message key={m.name} $faded={m.faded}>
            {m.badges?.map((B, i) => <Badge key={i}><B /></Badge>)}
            <Author $color={m.color}>{m.name}</Author>
            <span>{" : "}</span>
            {m.body}
          </Message>
        ))}
      </Chat>
      <CustomizeButton><Line size={7} d="M3 13l1-4 7-7 3 3-7 7z" fill="currentColor" width={1} />Customize Chrome</CustomizeButton>
      <Tray>
        {trayIcons.map((icon, i) => <TrayButton key={i} aria-label={`Tray app ${i + 1}`}>{icon}</TrayButton>)}
        <Language>ENG</Language>
        <Line size={9} width={1.5} d="M1 3h9M1 3v8h12V8M5 14h5M12 2h3v4h-3z" />
        <TrayButton aria-label="Volume"><Line size={9} width={1.5} d="M1 6h3l4-3v10l-4-3H1zM10 6q2 2 0 4M13 4q3 4 0 8" /></TrayButton>
        <Clock>9:36 PM<br />3/24/2026</Clock>
      </Tray>
    </Screen>
  );
}
